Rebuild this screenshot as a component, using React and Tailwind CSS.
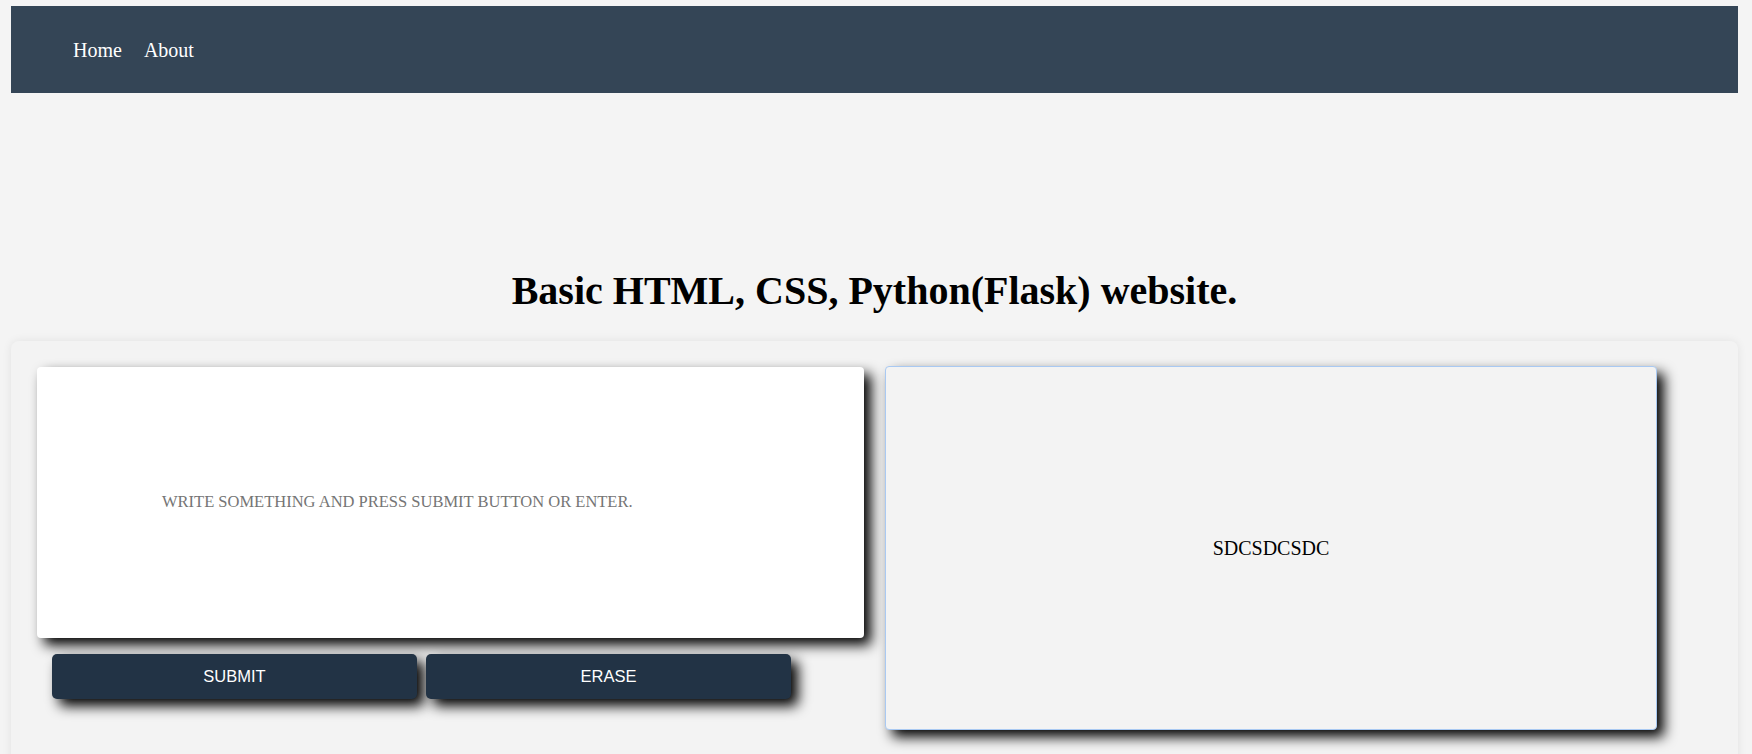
import { useState } from "react";

function App() {
  const [text, setText] = useState("");
  const [output, setOutput] = useState("SDCSDCSDC");

  // envoyer le texte
  const handleSubmit = () => {
    if (text.trim()) setOutput(text);
    setText("");
  };

  return (
    <div className="min-h-screen bg-[#f4f4f4] pt-[6px] pl-[11px] pr-[14px] font-['Liberation_Serif',serif]">
      <nav className="h-[87px] bg-[#344556] flex items-center pl-[62px] gap-[22px] text-[20px] text-white">
        <a href="#" className="text-white">Home</a>
        <a href="#" className="text-white">About</a>
      </nav>

      <h1 className="mt-[168px] text-center text-[40px] font-bold text-black leading-normal">
        Basic HTML, CSS, Python(Flask) website.
      </h1>

      <div className="mt-[20px] bg-[#f3f3f3] rounded-lg shadow-[0_0_10px_rgba(0,0,0,0.08)] pl-[26px] pt-[25px] pb-[40px] flex gap-[21px]">
        <div className="w-[827px] flex flex-col">
          <textarea
            value={text}
            onChange={(e) => setText(e.target.value)}
            onKeyDown={(e) => {
              if (e.key === "Enter") {
                e.preventDefault();
                handleSubmit();
              }
            }}
            placeholder="WRITE SOMETHING AND PRESS SUBMIT BUTTON OR ENTER."
            className="mt-[1px] h-[271px] w-full resize-none bg-white rounded-[4px] border-0 outline-none pt-[123px] pl-[125px] text-[16.5px] text-black placeholder:text-[#757575] shadow-[7px_7px_13px_#000] font-['Liberation_Serif',serif]"
          />
          <div className="flex gap-[9px] mt-[16px] pl-[15px]">
            <button
              onClick={handleSubmit}
              className="w-[365px] h-[45px] bg-[#223345] text-white rounded-[5px] text-[16.5px] font-['Liberation_Sans',Arial,sans-serif] shadow-[7px_7px_13px_#000]"
            >
              SUBMIT
            </button>
            <button
              onClick={() => { setText(""); setOutput(""); }}
              className="w-[365px] h-[45px] bg-[#223345] text-white rounded-[5px] text-[16.5px] font-['Liberation_Sans',Arial,sans-serif] shadow-[7px_7px_13px_#000]"
            >
              ERASE
            </button>
          </div>
        </div>

        <div className="w-[772px] h-[364px] bg-[#f3f3f3] border border-[#a9c9f2] rounded-[4px] shadow-[7px_7px_13px_#000] flex items-center justify-center text-[20px] text-black">
          {output}
        </div>
      </div>
    </div>
  );
}

export default App;
